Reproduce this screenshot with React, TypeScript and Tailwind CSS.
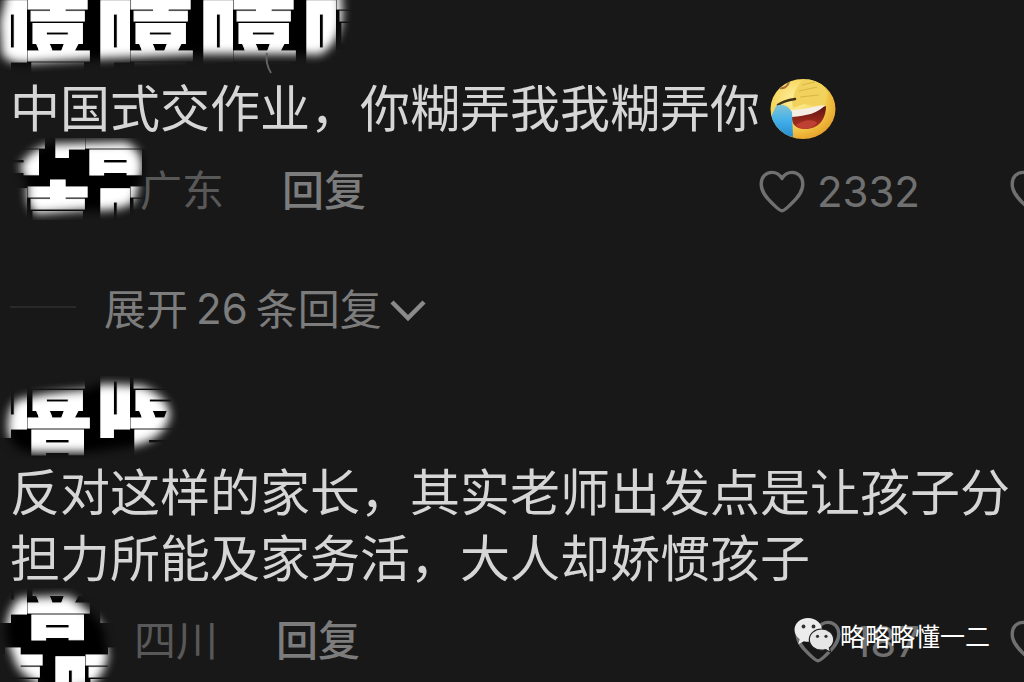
import { useId, type ReactNode } from "react";

type Glyph = { x: number; y: number };

/** A strip of brush paint filled with a repeated sticker character. */
function BrushCover({
  width,
  height,
  glyphs,
  brush,
  children,
}: {
  width: number;
  height: number;
  glyphs: Glyph[];
  brush: string;
  children?: ReactNode;
}) {
  const id = useId();
  return (
    <svg
      width={width}
      height={height}
      viewBox={`0 0 ${width} ${height}`}
      className="block shrink-0 font-['Noto_Sans_CJK_SC',sans-serif] text-[100px] font-black"
      aria-hidden="true"
    >
      <defs>
        <filter id={`${id}-soft`} x="-20%" y="-30%" width="140%" height="160%">
          <feGaussianBlur stdDeviation="5" />
        </filter>
        <mask id={`${id}-brush`} maskUnits="userSpaceOnUse" x="0" y="0" width={width} height={height}>
          <path d={brush} fill="white" filter={`url(#${id}-soft)`} />
        </mask>
      </defs>
      <g mask={`url(#${id}-brush)`}>
        <rect width={width} height={height} fill="#000" />
        {glyphs.map((g) => (
          <text key={`${g.x}-${g.y}`} x={g.x} y={g.y} fill="#fff" stroke="#fff" strokeWidth="1">
            嘻
          </text>
        ))}
      </g>
      {children}
    </svg>
  );
}

function HeartIcon() {
  return (
    <svg width="46" height="44" viewBox="0 0 46 44" fill="none" stroke="#707070" strokeWidth="3.4" strokeLinejoin="round" className="block shrink-0" aria-hidden="true">
      <path d="M23 8.5C20.5 4.2 16.8 2.4 12.8 2.4C6.7 2.4 2.2 7.4 2.2 14C2.2 22.4 8 28.5 14.2 34.2C17.2 37 20.5 40.8 23 40.8C25.5 40.8 28.8 37 31.8 34.2C38 28.5 43.8 22.4 43.8 14C43.8 7.4 39.3 2.4 33.2 2.4C29.2 2.4 25.5 4.2 23 8.5Z" />
    </svg>
  );
}

function LaughCryEmoji() {
  return (
    <svg width="68" height="64" viewBox="0 0 68 64" className="-mt-4 -mb-2 ml-2 inline-block align-middle" role="img" aria-label="捂脸笑哭">
      <defs>
        <radialGradient id="face" cx="0.4" cy="0.35" r="0.7">
          <stop offset="0" stopColor="#fff0a0" />
          <stop offset="0.6" stopColor="#f5d04e" />
          <stop offset="1" stopColor="#e59a26" />
        </radialGradient>
        <linearGradient id="tear" x1="0" y1="0" x2="0" y2="1">
          <stop offset="0" stopColor="#83c4d4" />
          <stop offset="0.5" stopColor="#41afea" />
          <stop offset="1" stopColor="#268dce" />
        </linearGradient>
        <linearGradient id="mouth" x1="0" y1="0" x2="0" y2="1">
          <stop offset="0" stopColor="#5e1511" />
          <stop offset="1" stopColor="#b63223" />
        </linearGradient>
        <clipPath id="face-clip">
          <ellipse cx="35" cy="32" rx="32.5" ry="30" />
        </clipPath>
      </defs>
      <g clipPath="url(#face-clip)">
        <rect width="68" height="64" fill="url(#face)" />
        <path d="M24 25L27 14L34 3L51 1L60 16L57 27L45 29L36 27L25 31Z" fill="#f0d25c" />
        <path d="M31 14L49 10M32 20L51 18M34 8L47 5" stroke="#dcb548" strokeWidth="1" />
        <path d="M12 11C16 12 20 9 21 5" stroke="#a8713a" strokeWidth="2" fill="none" />
        <path d="M10 28C15 24 20 23 27 22" stroke="#413516" strokeWidth="2.6" fill="none" strokeLinecap="round" />
        <path d="M24 35C36 36 48 33 58 29C58 42 51 52 37 52C30 52 25 49 24 43Z" fill="url(#mouth)" />
        <path d="M28 48C36 42 46 42 49 46C43 53 34 54 28 48Z" fill="#bd4032" />
        <path d="M23 33C36 33 45 29 57 28C51 36 38 39 24 40Z" fill="#f5eee4" />
        <path d="M8 29C13 26 20 28 24 35L25 60C13 59 5 51 3 40Z" fill="url(#tear)" />
      </g>
    </svg>
  );
}

function WeChatIcon() {
  return (
    <svg width="40" height="36" viewBox="0 0 40 36" className="block shrink-0" aria-hidden="true">
      <path d="M14 1C6.300 1 0.500 6.200 0.500 12.800C0.500 16.700 2.500 20 5.700 22.200L4.300 27.200L10 24.200C11.300 24.600 12.700 24.700 14 24.700C21.700 24.700 28 19.400 28 12.800C28 6.200 21.700 1 14 1Z" fill="#ececec" />
      <path d="M27.500 12C20.800 12 15.300 16.700 15.300 22.600C15.300 28.500 20.800 33.200 27.500 33.200C29 33.200 30.400 33 31.700 32.600L36.600 35.200L35.300 30.900C38 28.900 39.700 26 39.700 22.600C39.700 16.700 34.200 12 27.500 12Z" fill="#e6e6e6" stroke="#222" strokeWidth="1.200" />
      <g fill="#333">
        <circle cx="9.500" cy="9.500" r="1.900" />
        <circle cx="19.500" cy="9.500" r="1.900" />
        <circle cx="23.500" cy="19.300" r="1.600" />
        <circle cx="32" cy="19.300" r="1.600" />
      </g>
    </svg>
  );
}

function MetaRow({ cover, place, likes }: { cover: ReactNode; place: string; likes: string }) {
  return (
    <footer className="flex h-[100px] items-center text-[42px] leading-[60px] text-[#707070]">
      {cover}
      <span className="w-[142px] shrink-0 text-[#585858]">{place}</span>
      <button type="button" className="shrink-0 font-medium text-[#7c7c7c]">
        回复
      </button>
      <div className="ml-auto flex shrink-0 items-center pt-2">
        <button type="button" aria-label={`赞 ${likes}`} className="mr-[90px] flex items-center gap-3 font-['Inter',sans-serif]">
          <HeartIcon />
          <span>{likes}</span>
        </button>
        <button type="button" aria-label="踩" className="w-[14px] overflow-hidden">
          <HeartIcon />
        </button>
      </div>
    </footer>
  );
}

export default function App() {
  return (
    <main className="relative h-screen overflow-hidden bg-[#181818] font-['Noto_Sans_CJK_SC',sans-serif] text-[#d6d6d6]">
      <article>
        <header className="h-[72px]">
          <BrushCover
            width={360}
            height={76}
            brush="M8 -12L0 22L2 54Q8 64 28 63L90 59L206 54L300 54L320 55Q344 40 342 8L340 -12Z"
            glyphs={[
              { x: -8, y: 78 },
              { x: 95, y: 78 },
              { x: 198, y: 78 },
              { x: 301, y: 78 },
            ]}
          >
            <path d="M267 53Q265 63 271 73" fill="none" stroke="#626262" strokeWidth="2" />
          </BrushCover>
        </header>
        <p className="pl-[10px] text-[50px] leading-[66px]">
          中国式交作业，你糊弄我我糊弄你
          <LaughCryEmoji />
        </p>
        <MetaRow
          cover={
            <div className="w-[140px] shrink-0 self-start">
              <BrushCover
                width={148}
                height={82}
                brush="M50 6L126 4Q144 14 142 32L134 64Q120 74 84 72L36 76Q24 64 28 48L20 28Q30 12 50 6Z"
                glyphs={[
                  { x: -53, y: 27 },
                  { x: 50, y: 27 },
                  { x: -8, y: 128 },
                  { x: 95, y: 128 },
                ]}
              />
            </div>
          }
          place="广东"
          likes="2332"
        />
      </article>
      <div className="flex h-[138px] items-center gap-7 pl-[10px]">
        <span className="h-[2px] w-[66px] bg-[#292929]" />
        <button type="button" className="flex items-center text-[42px] leading-[60px] text-[#7c7c7c]">
          展开
          <span className="mx-2 pt-1 font-['Inter',sans-serif]">26</span>
          条回复
          <svg width="36" height="24" viewBox="0 0 36 24" fill="none" stroke="#8a8a8a" strokeWidth="4.500" className="mt-2 ml-2" aria-hidden="true">
            <path d="M2 3L18 19L34 3" />
          </svg>
        </button>
      </div>
      <article>
        <header className="h-20">
          <BrushCover
            width={190}
            height={84}
            brush="M18 24Q48 16 86 14L102 8L142 10Q170 22 170 40Q164 64 132 70L88 76L32 76Q10 74 8 52Q8 30 18 24Z"
            glyphs={[
              { x: -8, y: 69 },
              { x: 95, y: 69 },
            ]}
          />
        </header>
        <p className="pl-[10px] text-[50px] leading-[66px]">
          反对这样的家长，其实老师出发点是让孩子分担力所能及家务活，大人却娇惯孩子
        </p>
        <MetaRow
          cover={
            <div className="w-[134px] shrink-0 self-start">
              <BrushCover
                width={120}
                height={100}
                brush="M20 10L68 8Q88 20 102 38L108 68Q104 88 90 98L58 104Q18 90 14 70L6 48Q6 22 20 10Z"
                glyphs={[
                  { x: -8, y: 42 },
                  { x: 95, y: 42 },
                  { x: -53, y: 146 },
                  { x: 50, y: 146 },
                ]}
              />
            </div>
          }
          place="四川"
          likes="187"
        />
      </article>
      <div className="absolute right-[34px] bottom-[27px] flex items-center gap-[6px] text-[25px] leading-[40px] text-white">
        <WeChatIcon />
        <span>略略略懂一二</span>
      </div>
    </main>
  );
}
